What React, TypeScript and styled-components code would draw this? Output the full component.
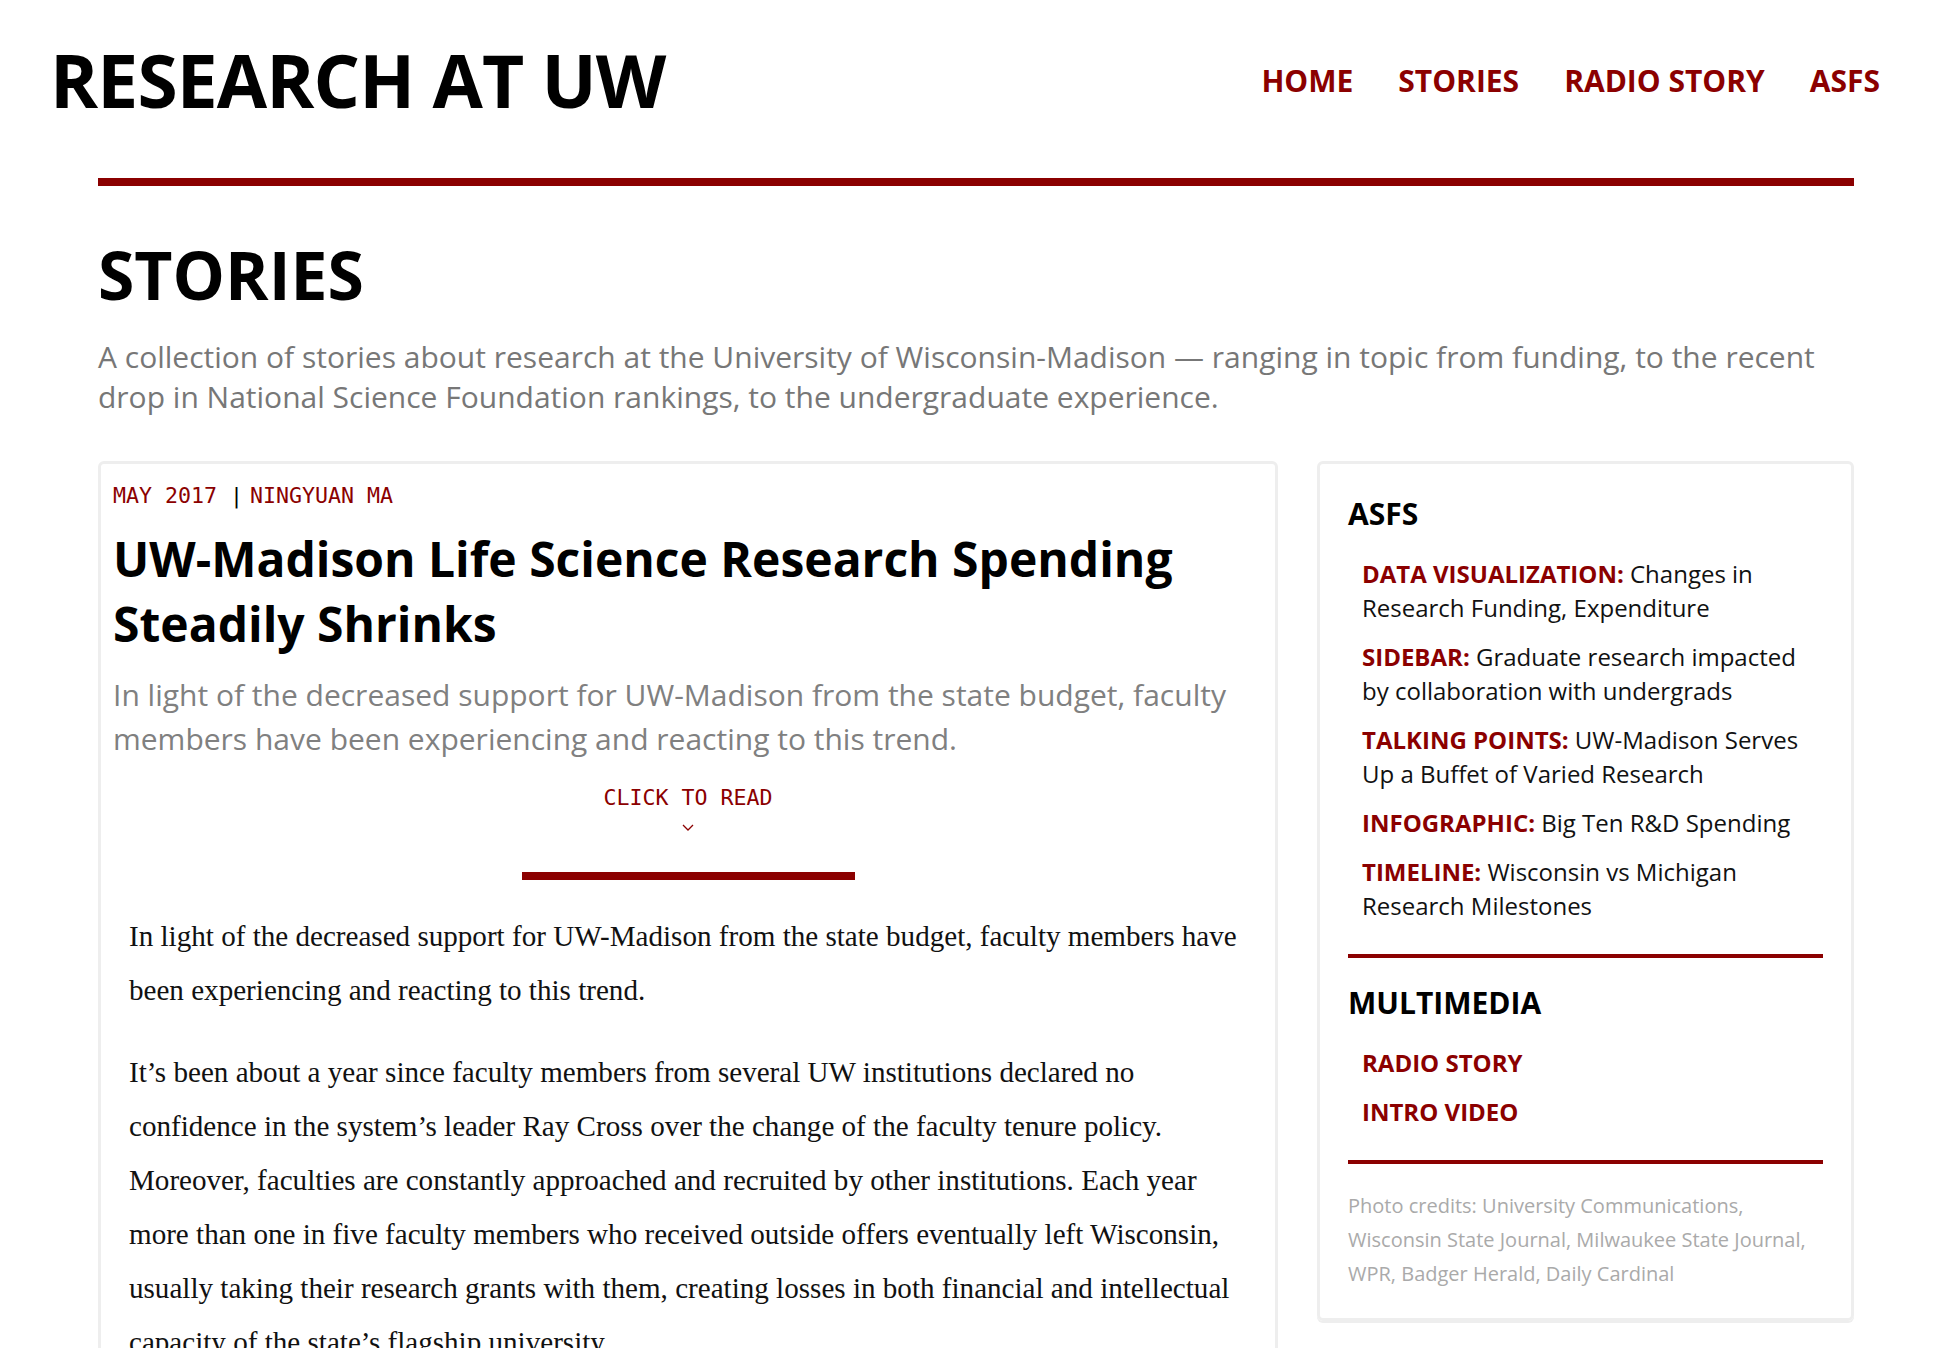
import React from "react";
import styled, { createGlobalStyle } from "styled-components";

const RED = "#8b0000";

const GlobalStyle = createGlobalStyle`
  html, body {
    margin: 0;
    padding: 0;
    background: #ffffff;
  }
  body {
    font-family: "Open Sans", "Liberation Sans", sans-serif;
    color: #111;
  }
  * { box-sizing: border-box; }
`;

const Header = styled.header`
  display: flex;
  justify-content: space-between;
  align-items: flex-start;
  padding: 36px 74px 0 50px;
`;

const SiteTitle = styled.h1`
  margin: 0;
  font-size: 73px;
  line-height: 87.6px;
  font-weight: 700;
  color: #000;
  letter-spacing: -0.85px;
`;

const Nav = styled.nav`
  display: flex;
  gap: 45px;
  margin-top: 27px;
`;

const NavLink = styled.a`
  font-size: 30px;
  line-height: 36px;
  font-weight: 700;
  color: ${RED};
  text-decoration: none;
`;

const Container = styled.main`
  margin: 0 100px 0 98px;
`;

const Rule = styled.div<{ $thick?: number }>`
  height: ${(p) => p.$thick ?? 8}px;
  background: ${RED};
`;

const TopRule = styled(Rule)`
  margin-top: 54px;
`;

const PageTitle = styled.h2`
  margin: 49px 0 0;
  font-size: 66px;
  line-height: 79.2px;
  font-weight: 700;
  color: #000;
`;

const Lede = styled.p`
  margin: 23px 0 0;
  font-size: 30px;
  line-height: 40px;
  color: #777;
`;

const Columns = styled.div`
  display: grid;
  grid-template-columns: minmax(0, 1180fr) minmax(0, 537fr);
  gap: 39px;
  align-items: start;
  margin-top: 44px;
`;

const Card = styled.article`
  border: 3px solid #eeeeee;
  border-radius: 6px;
  padding: 17px 12px 0;
`;

const Mono = styled.div`
  font-family: "DejaVu Sans Mono", "Liberation Mono", monospace;
  font-size: 21.6px;
  line-height: 30.24px;
  color: ${RED};
  text-transform: uppercase;
`;

const Sep = styled.span`
  color: #000;
  margin-right: 7px;
`;

const StoryTitle = styled.h3`
  margin: 15px 0 0;
  font-size: 48px;
  line-height: 65px;
  font-weight: 700;
  color: #000;
`;

const StoryDek = styled.p`
  margin: 17px 0 0;
  font-size: 30px;
  line-height: 44px;
  color: #808080;
`;

const ReadMore = styled.a`
  display: flex;
  flex-direction: column;
  align-items: center;
  margin-top: 22px;
  text-decoration: none;
`;

const Chevron = styled.svg`
  margin-top: 11px;
  display: block;
`;

const ReadBar = styled.div`
  width: 333px;
  height: 8px;
  background: ${RED};
  margin: 41px auto 0;
`;

const Body = styled.div`
  padding: 29px 16px 0;
`;

const Para = styled.p`
  margin: 0 0 28px;
  font-family: "Liberation Serif", "DejaVu Serif", serif;
  font-size: 29.1px;
  line-height: 54px;
  color: #111;
`;

const Sidebar = styled.aside`
  border: 3px solid #eeeeee;
  border-radius: 6px;
  padding: 33px 28px 27px;
  box-shadow: 0 2px 0 #eeeeee;
`;

const SideHeading = styled.h4<{ $spaced?: boolean }>`
  margin: ${(p) => (p.$spaced ? "28px" : "0")} 0 0;
  font-size: 30px;
  line-height: 34px;
  font-weight: 700;
  color: #000;
`;

const SideList = styled.ul`
  list-style: none;
  margin: 26px 0 0;
  padding: 0 0 0 14px;
`;

const SideItem = styled.li`
  font-size: 24px;
  line-height: 34px;
  color: #111;
  margin-bottom: 15px;
  &:last-child { margin-bottom: 0; }
`;

const Label = styled.span`
  font-weight: 700;
  color: ${RED};
`;

const SideDivider = styled(Rule)`
  margin-top: 31px;
`;

const Credits = styled.p`
  margin: 25px 0 0;
  font-size: 20px;
  line-height: 34px;
  color: #aaaaaa;
`;

const asfs = [
  { label: "DATA VISUALIZATION:", text: "Changes in Research Funding, Expenditure" },
  { label: "SIDEBAR:", text: "Graduate research impacted by collaboration with undergrads" },
  { label: "TALKING POINTS:", text: "UW-Madison Serves Up a Buffet of Varied Research" },
  { label: "INFOGRAPHIC:", text: "Big Ten R&D Spending" },
  { label: "TIMELINE:", text: "Wisconsin vs Michigan Research Milestones" },
];

export default function App() {
  return (
    <>
      <GlobalStyle />
      <Header>
        <SiteTitle>RESEARCH AT UW</SiteTitle>
        <Nav>
          <NavLink href="#">HOME</NavLink>
          <NavLink href="#">STORIES</NavLink>
          <NavLink href="#">RADIO STORY</NavLink>
          <NavLink href="#">ASFS</NavLink>
        </Nav>
      </Header>
      <Container>
        <TopRule />
        <PageTitle>STORIES</PageTitle>
        <Lede>
          A collection of stories about research at the University of Wisconsin-Madison — ranging in topic
          from funding, to the recent drop in National Science Foundation rankings, to the undergraduate
          experience.
        </Lede>
        <Columns>
          <Card>
            <Mono>
              May 2017 <Sep>|</Sep>Ningyuan Ma
            </Mono>
            <StoryTitle>UW-Madison Life Science Research Spending Steadily Shrinks</StoryTitle>
            <StoryDek>
              In light of the decreased support for UW-Madison from the state budget, faculty members have
              been experiencing and reacting to this trend.
            </StoryDek>
            <ReadMore href="#">
              <Mono>Click to read</Mono>
              <Chevron width="12" height="7" viewBox="0 0 12 7" fill="none">
                <path d="M1 1l5 5 5-5" stroke={RED} strokeWidth="1.3" />
              </Chevron>
            </ReadMore>
            <ReadBar />
            <Body>
              <Para>
                In light of the decreased support for UW-Madison from the state budget, faculty members have
                been experiencing and reacting to this trend.
              </Para>
              <Para>
                It’s been about a year since faculty members from several UW institutions declared no
                confidence in the system’s leader Ray Cross over the change of the faculty tenure policy.
                Moreover, faculties are constantly approached and recruited by other institutions. Each year
                more than one in five faculty members who received outside offers eventually left Wisconsin,
                usually taking their research grants with them, creating losses in both financial and
                intellectual capacity of the state’s flagship university.
              </Para>
            </Body>
          </Card>
          <Sidebar>
            <SideHeading>ASFS</SideHeading>
            <SideList>
              {asfs.map((a) => (
                <SideItem key={a.label}>
                  <Label>{a.label}</Label> {a.text}
                </SideItem>
              ))}
            </SideList>
            <SideDivider $thick={4} />
            <SideHeading $spaced>MULTIMEDIA</SideHeading>
            <SideList>
              <SideItem>
                <Label>RADIO STORY</Label>
              </SideItem>
              <SideItem>
                <Label>INTRO VIDEO</Label>
              </SideItem>
            </SideList>
            <SideDivider $thick={4} />
            <Credits>
              Photo credits: University Communications, Wisconsin State Journal, Milwaukee State Journal, WPR,
              Badger Herald, Daily Cardinal
            </Credits>
          </Sidebar>
        </Columns>
      </Container>
    </>
  );
}
